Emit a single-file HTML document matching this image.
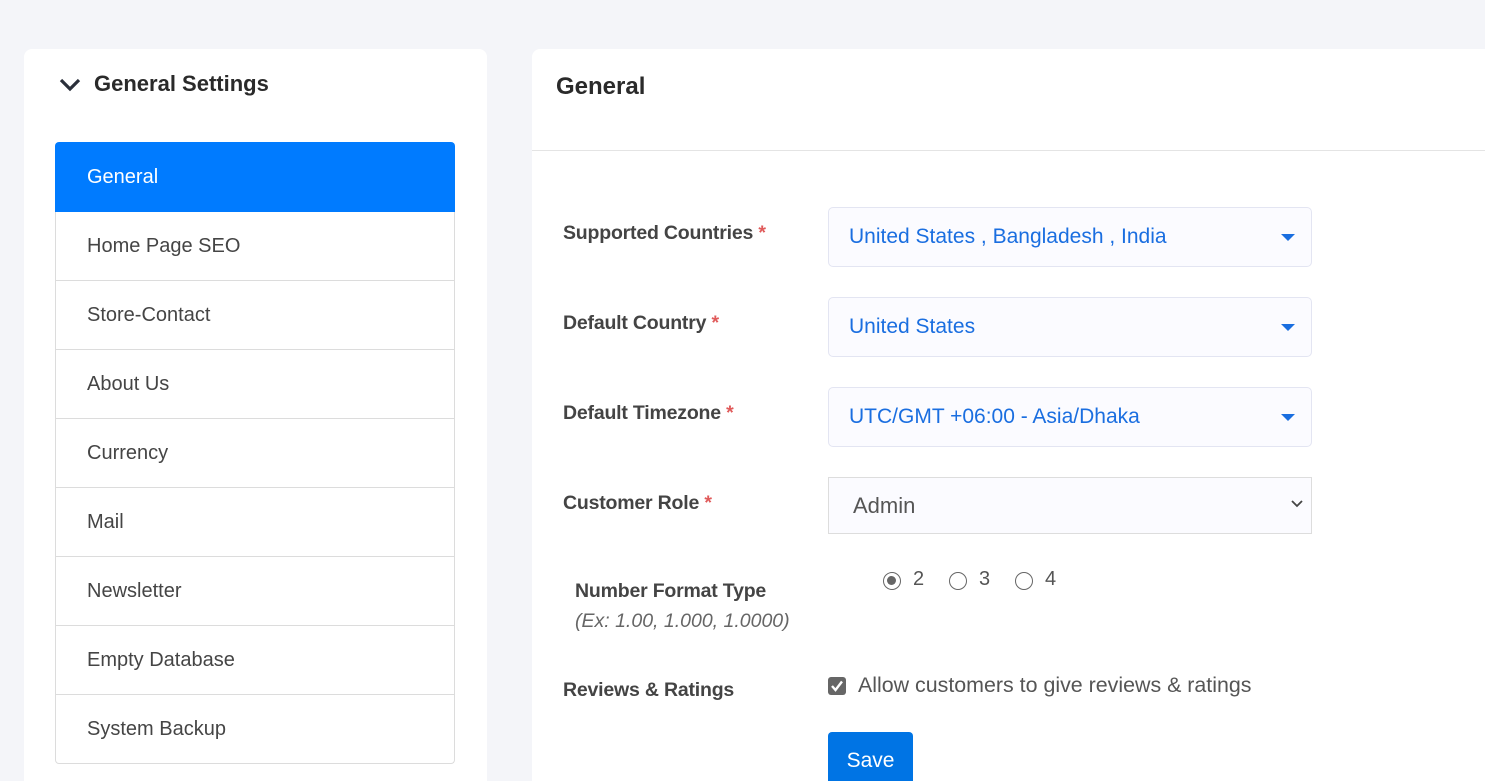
<!DOCTYPE html>
<html style="overflow:hidden;height:781px"><head><style>
*{box-sizing:border-box;margin:0;padding:0}
body{width:1485px;height:781px;overflow:hidden;background:#f4f5f9;font-family:"Liberation Sans",sans-serif;position:relative}
.card{position:absolute;background:#fff;border-radius:8px}
.abs{position:absolute}
.item{position:absolute;left:55px;width:400px;height:69px;border:1px solid #dcdcdc;border-top:none;font-size:20px;color:#454545;padding-left:31px;line-height:68px}
.lbl{position:absolute;left:563px;font-size:19.5px;font-weight:bold;color:#444;letter-spacing:-0.2px}
.req{color:#e05a5a}
.sel{position:absolute;left:828px;width:484px;height:60px;background:#fbfbff;border:1px solid #e3e5f2;border-radius:5px;font-size:21px;color:#1a6ee0;padding-left:20px;line-height:58px}
.sel:after{content:"";position:absolute;right:16px;top:26px;border-left:7px solid transparent;border-right:7px solid transparent;border-top:7px solid #1a6ee0}
.radio{position:absolute;top:572px;width:18px;height:18px;border:1.5px solid #666;border-radius:50%}
.rt{position:absolute;top:568px;font-size:20px;color:#555}
</style></head><body>
<div class="card" style="left:24px;top:49px;width:463px;height:740px"></div>
<svg class="abs" style="left:59px;top:77px" width="22" height="16" viewBox="0 0 22 16"><path d="M2 3 L11 12 L20 3" fill="none" stroke="#2a2f3a" stroke-width="3.2"/></svg>
<div class="abs" style="left:94px;top:71px;font-size:22px;font-weight:bold;color:#2a2a2a">General Settings</div>
<div class="abs" style="left:55px;top:142px;width:400px;height:70px;background:#007bff;border-radius:4px 4px 0 0;color:#fff;font-size:20px;padding-left:32px;line-height:70px">General</div>
<div class="item" style="top:212px">Home Page SEO</div>
<div class="item" style="top:281px">Store-Contact</div>
<div class="item" style="top:350px">About Us</div>
<div class="item" style="top:419px">Currency</div>
<div class="item" style="top:488px">Mail</div>
<div class="item" style="top:557px">Newsletter</div>
<div class="item" style="top:626px">Empty Database</div>
<div class="item" style="top:695px;border-radius:0 0 4px 4px">System Backup</div>

<div class="card" style="left:532px;top:49px;width:980px;height:740px"></div>
<div class="abs" style="left:556px;top:73px;font-size:24px;font-weight:bold;color:#2a2a2a">General</div>
<div class="abs" style="left:532px;top:150px;width:953px;height:1px;background:#e4e4e4"></div>

<div class="lbl" style="top:222px">Supported Countries <span class="req">*</span></div>
<div class="sel" style="top:207px">United States , Bangladesh , India</div>
<div class="lbl" style="top:312px">Default Country <span class="req">*</span></div>
<div class="sel" style="top:297px">United States</div>
<div class="lbl" style="top:402px">Default Timezone <span class="req">*</span></div>
<div class="sel" style="top:387px">UTC/GMT +06:00 - Asia/Dhaka</div>
<div class="lbl" style="top:492px">Customer Role <span class="req">*</span></div>
<div class="abs" style="left:828px;top:477px;width:484px;height:57px;background:#fbfbff;border:1px solid #ddd;font-size:22px;color:#555;padding-left:24px;line-height:55px">Admin</div>
<svg class="abs" style="left:1290px;top:499px" width="14" height="10" viewBox="0 0 14 10"><path d="M2 2 L7 7 L12 2" fill="none" stroke="#444" stroke-width="1.8"/></svg>

<div class="abs" style="left:575px;top:580px;font-size:19.5px;font-weight:bold;color:#444;letter-spacing:-0.2px">Number Format Type</div>
<div class="abs" style="left:575px;top:610px;font-size:19.5px;font-style:italic;color:#666">(Ex: 1.00, 1.000, 1.0000)</div>
<div class="radio" style="left:883px"><div style="margin:3px;width:9px;height:9px;border-radius:50%;background:#666"></div></div>
<div class="rt" style="left:913px">2</div>
<div class="radio" style="left:949px"></div><div class="rt" style="left:979px">3</div>
<div class="radio" style="left:1015px"></div><div class="rt" style="left:1045px">4</div>

<div class="lbl" style="top:679px">Reviews &amp; Ratings</div>
<div class="abs" style="left:828px;top:677px;width:18px;height:18px;background:#666;border-radius:3px"></div>
<svg class="abs" style="left:828px;top:677px" width="18" height="18" viewBox="0 0 18 18"><path d="M4 9 L7.5 13 L14 4.5" fill="none" stroke="#fff" stroke-width="2.4"/></svg>
<div class="abs" style="left:858px;top:673px;font-size:21.4px;color:#555">Allow customers to give reviews &amp; ratings</div>

<div class="abs" style="left:828px;top:732px;width:85px;height:60px;background:#0074e4;border-radius:4px;color:#fff;font-size:21px;text-align:center;padding-top:17px">Save</div>
</body></html>
